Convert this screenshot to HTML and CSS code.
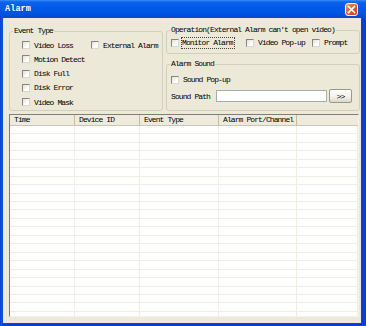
FILE: index.html
```html
<!DOCTYPE html>
<html>

<head>
  <meta charset="UTF-8">
  <title>Alarm</title>
  <link rel="stylesheet" href="styles.css">
</head>

<body>
  <div class="window">
    <div class="titlebar">
      <span class="title">Alarm</span>
      <span class="close-btn">
        <svg width="9" height="9" viewBox="0 0 9 9"><path d="M1.5 1.5 L7.5 7.5 M7.5 1.5 L1.5 7.5" stroke="#fff" stroke-width="1.6" stroke-linecap="square"/></svg>
      </span>
    </div>
    <div class="frame">
      <div class="top">
        <fieldset class="group group-event">
          <legend>Event Type</legend>
          <div class="event-grid">
            <label class="check"><span class="box"></span>Video Loss</label>
            <label class="check"><span class="box"></span>External Alarm</label>
            <label class="check full"><span class="box"></span>Motion Detect</label>
            <label class="check full"><span class="box"></span>Disk Full</label>
            <label class="check full"><span class="box"></span>Disk Error</label>
            <label class="check full"><span class="box"></span>Video Mask</label>
          </div>
        </fieldset>
        <div class="right-col">
          <fieldset class="group group-op">
            <legend>Operation(External Alarm can't open video)</legend>
            <div class="op-row">
              <label class="check op-monitor"><span class="box box-focus"></span><span class="focus">Monitor Alarm</span></label>
              <label class="check op-video"><span class="box"></span>Video Pop-up</label>
              <label class="check"><span class="box"></span>Prompt</label>
            </div>
          </fieldset>
          <fieldset class="group group-sound">
            <legend>Alarm Sound</legend>
            <div class="sound-row">
              <label class="check"><span class="box"></span>Sound Pop-up</label>
            </div>
            <div class="path-row">
              <span class="path-label">Sound Path</span
              ><span class="path-input"></span
              ><span class="path-btn">&gt;&gt;</span>
            </div>
          </fieldset>
        </div>
      </div>

      <div class="list">
        <div class="list-head">
          <span class="col col-1">Time</span>
          <span class="col col-2">Device ID</span>
          <span class="col col-3">Event Type</span>
          <span class="col col-4">Alarm Port/Channel</span>
          <span class="col col-5"></span>
        </div>
        <div class="list-body">
          <span class="col col-1"></span>
          <span class="col col-2"></span>
          <span class="col col-3"></span>
          <span class="col col-4"></span>
          <span class="col col-5"></span>
        </div>
      </div>
    </div>
  </div>
</body>

</html>
```

FILE: styles.css
```css
body {
  margin: 0;
  font-family: "Liberation Mono", "DejaVu Sans Mono", monospace;
  font-size: 8px;
  letter-spacing: -0.9px;
  color: #000;
}

.window {
  display: flex;
  flex-direction: column;
  width: 366px;
  height: 326px;
  background: linear-gradient(to right, #0A3ED6, #1B52E0 2px, #0A3ED6 3px);
}

.titlebar {
  display: flex;
  align-items: center;
  justify-content: space-between;
  height: 18px;
  padding: 0 8px 0 5px;
  background: linear-gradient(#3C8DF8 0, #0D63EC 2px, #0058EA 8px, #0054E4 13px, #0047D2 18px);
}

.title {
  font-size: 8.5px;
  font-weight: bold;
  letter-spacing: 0.1px;
  color: #fff;
}

.close-btn {
  display: flex;
  align-items: center;
  justify-content: center;
  box-sizing: border-box;
  width: 13px;
  height: 13px;
  border: 1px solid #fff;
  border-radius: 3px;
  background: linear-gradient(135deg, #F2916F, #E0542D 55%, #C93E1A);
}

.frame {
  flex: 1;
  margin: 0 5px 3px 3px;
  padding: 8px 0 0 6px;
  background: #ECE9D8;
}

.top {
  display: flex;
  gap: 3px;
}

.group {
  box-sizing: border-box;
  min-width: 0;
  margin: 0;
  padding: 0;
  border: 1px solid #D0D0BF;
  border-radius: 3px;
}

.group legend {
  margin-left: 3px;
  padding: 0 1px;
  line-height: 8px;
}

.group-event {
  width: 154px;
  height: 84px;
  margin-top: 1px;
}

.event-grid {
  display: grid;
  grid-template-columns: 69px auto;
  grid-auto-rows: 14.25px;
  padding: 3px 0 0 12px;
}

.full {
  grid-column: 1 / span 2;
}

.check {
  display: flex;
  align-items: center;
  white-space: nowrap;
}

.box {
  flex: none;
  box-sizing: border-box;
  width: 8px;
  height: 8px;
  margin-right: 4px;
  border: 1px solid;
  border-color: #858585 #D8D8D0 #D8D8D0 #858585;
  background: linear-gradient(135deg, #E2E1D8, #fff 70%);
}

.right-col {
  display: flex;
  flex-direction: column;
  gap: 6px;
  width: 194px;
}

.group-op {
  height: 28px;
}

.op-row {
  display: flex;
  align-items: center;
  height: 11px;
  padding: 3px 0 0 4px;
}

.op-monitor {
  width: 75px;
}

.op-video {
  width: 66px;
}

.box-focus {
  margin-right: 2px;
}

.focus {
  padding-right: 1px;
  line-height: 10px;
  border: 1px dotted #444;
}

.group-sound {
  height: 51px;
}

.sound-row {
  display: flex;
  align-items: center;
  height: 11px;
  padding: 6px 0 0 4px;
}

.path-row {
  display: flex;
  align-items: center;
  height: 14px;
  margin-top: 4px;
  padding-left: 4px;
}

.path-label {
  width: 45px;
}

.path-input {
  box-sizing: border-box;
  width: 111px;
  height: 12px;
  border: 1px solid #A5ACB2;
  background: #fff;
}

.path-btn {
  display: flex;
  align-items: center;
  justify-content: center;
  box-sizing: border-box;
  width: 23px;
  height: 14px;
  margin-left: 2px;
  border: 1px solid #9A988A;
  border-radius: 2px;
  background: linear-gradient(#fff, #F1EFE6 60%, #DCD8C8);
}

.list {
  display: flex;
  flex-direction: column;
  box-sizing: border-box;
  width: 350px;
  height: 203px;
  margin-top: 3px;
  border: 1px solid;
  border-color: #7E7E7E #F4F3EE #F4F3EE #7E7E7E;
  background: #fff;
}

.list-head {
  display: flex;
  flex: none;
  height: 10px;
  border-bottom: 1px solid #CBC7B8;
  background: #EEEBDD;
}

.list-head .col {
  line-height: 10px;
  border-right: 1px solid #BFBCA8;
}

.col {
  box-sizing: border-box;
  padding-left: 4px;
  white-space: nowrap;
}

.col-1 {
  width: 65px;
}

.col-2 {
  width: 65px;
}

.col-3 {
  width: 79px;
}

.col-4 {
  width: 78px;
}

.col-5 {
  width: 61px;
}

.list-head .col-5 {
  border-right: none;
}

.list-body {
  display: flex;
  flex: 1;
  background: repeating-linear-gradient(to bottom, #fff 0, #fff 7.45px, #EFEEE5 7.45px, #EFEEE5 8.45px);
}

.list-body .col {
  border-right: 1px solid #EFEEE5;
}
```
